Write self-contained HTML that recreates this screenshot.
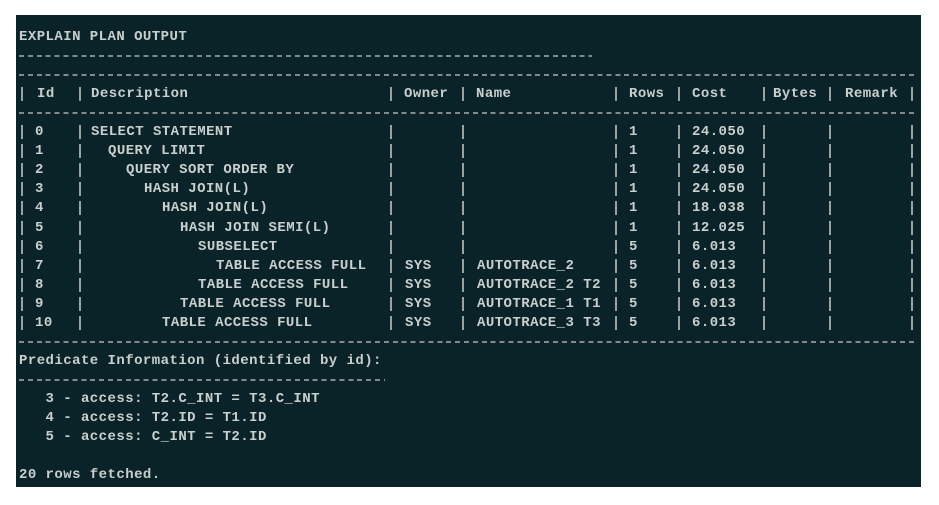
<!DOCTYPE html>
<html><head><meta charset="utf-8"><style>
html,body{margin:0;padding:0;background:#fff;width:939px;height:505px;overflow:hidden}
#t{position:absolute;left:16px;top:15px;width:905px;height:472px;background:#0a2329}
.s{position:absolute;font-family:"Liberation Mono",monospace;font-size:14px;letter-spacing:0.45px;color:#c9cfcc;white-space:pre;line-height:19px;font-weight:bold}
.d{position:absolute;height:2px;background:repeating-linear-gradient(90deg,#7f8c8a 0 5px,transparent 5px 8.9px)}
.b{position:absolute;width:2px;height:14px;background:#9aa3a0}
</style></head><body>
<div id="t"></div>
<div id="c"></div>
<script>
var c=document.getElementById('c'),h='';
function T(x,y,s){h+='<div class="s" style="left:'+x+'px;top:'+(y-8)+'px">'+s+'</div>';}
function D(x1,x2,y){h+='<div class="d" style="left:'+x1+'px;width:'+(x2-x1)+'px;top:'+y+'px"></div>';}
function B(x,y){h+='<div class="b" style="left:'+(x-1)+'px;top:'+(y-6)+'px"></div>';}
var bars=[22,80,391,463,616,679,764,830,912];
T(19,36,'EXPLAIN PLAN OUTPUT');
D(19,592,55);D(19,916,74);
bars.forEach(function(x){B(x,93)});
T(37,93,'Id');T(91,93,'Description');T(404,93,'Owner');T(476,93,'Name');T(629,93,'Rows');T(692,93,'Cost');T(773,93,'Bytes');T(845,93,'Remark');
D(19,916,112);
var rows=[
['0',91,'SELECT STATEMENT','','','1','24.050'],
['1',108,'QUERY LIMIT','','','1','24.050'],
['2',126,'QUERY SORT ORDER BY','','','1','24.050'],
['3',144,'HASH JOIN(L)','','','1','24.050'],
['4',162,'HASH JOIN(L)','','','1','18.038'],
['5',180,'HASH JOIN SEMI(L)','','','1','12.025'],
['6',198,'SUBSELECT','','','5','6.013'],
['7',216,'TABLE ACCESS FULL','SYS','AUTOTRACE_2','5','6.013'],
['8',198,'TABLE ACCESS FULL','SYS','AUTOTRACE_2 T2','5','6.013'],
['9',180,'TABLE ACCESS FULL','SYS','AUTOTRACE_1 T1','5','6.013'],
['10',162,'TABLE ACCESS FULL','SYS','AUTOTRACE_3 T3','5','6.013']];
rows.forEach(function(r,i){var y=131+i*19.1;
bars.forEach(function(x){B(x,y)});
T(35,y,r[0]);T(r[1],y,r[2]);T(405,y,r[3]);T(477,y,r[4]);T(629,y,r[5]);T(692,y,r[6]);});
D(19,916,341);
T(19,360,'Predicate Information (identified by id):');
D(19,385,379);
T(19,398,'   3 - access: T2.C_INT = T3.C_INT');
T(19,417,'   4 - access: T2.ID = T1.ID');
T(19,436,'   5 - access: C_INT = T2.ID');
T(19,474,'20 rows fetched.');
c.innerHTML=h;
</script>
</body></html>
